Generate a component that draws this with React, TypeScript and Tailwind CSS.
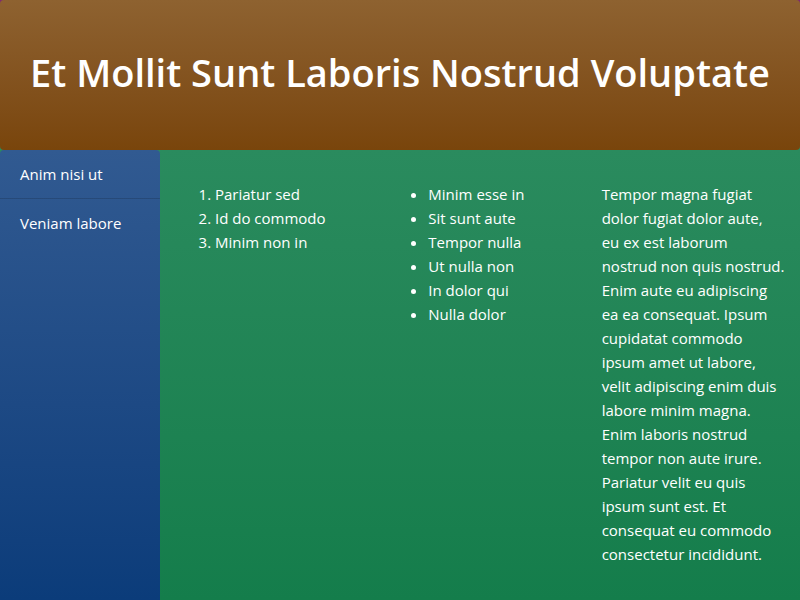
const navItems = ["Anim nisi ut", "Veniam labore"];
const steps = ["Pariatur sed", "Id do commodo", "Minim non in"];
const points = ["Minim esse in", "Sit sunt aute", "Tempor nulla", "Ut nulla non", "In dolor qui", "Nulla dolor"];

export default function App() {
  return (
    <div className="flex min-h-screen flex-col bg-linear-to-b from-[#7d2a72] from-10% to-[#2b8d5f] to-20% font-['Open_Sans','Noto_Sans',sans-serif] text-[15px] leading-6 text-white">
      <header className="flex h-[150px] items-center justify-center rounded bg-linear-to-b from-[#8e6230] to-[#79450b]">
        <h1 className="pb-1.5 text-[38px] leading-12 font-semibold">Et Mollit Sunt Laboris Nostrud Voluptate</h1>
      </header>
      <div className="flex flex-1 bg-linear-to-b from-[#2a8b5e] to-[#147d4b]">
        <nav className="w-1/5 rounded-t bg-linear-to-b from-[#315a91] to-[#0b3c7a]">
          {navItems.map((item) => (
            <a key={item} href="#" className="block border-b border-black/15 px-5 py-3 last:border-b-0">
              {item}
            </a>
          ))}
        </nav>
        <main className="grid flex-1 grid-cols-3 py-8">
          <ol className="list-decimal pl-[55px]">
            {steps.map((s) => (
              <li key={s}>{s}</li>
            ))}
          </ol>
          <ul className="list-disc pl-[55px]">
            {points.map((p) => (
              <li key={p}>{p}</li>
            ))}
          </ul>
          <p className="pr-3.5 pl-[15px]">
            Tempor magna fugiat dolor fugiat dolor aute,
            <br />
            eu ex est laborum
            <br />
            nostrud non quis nostrud. Enim aute eu adipiscing ea ea consequat. Ipsum cupidatat commodo ipsum amet ut labore, velit adipiscing enim duis labore minim magna. Enim laboris nostrud tempor non aute irure. Pariatur velit eu quis ipsum sunt est. Et consequat eu commodo consectetur incididunt.
          </p>
        </main>
      </div>
    </div>
  );
}
